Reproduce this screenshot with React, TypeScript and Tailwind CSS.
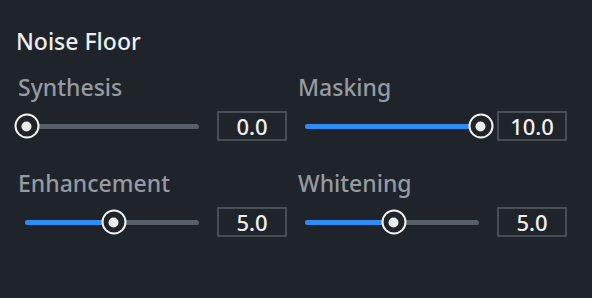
import React from "react";

type Param = { label: string; value: number };

const params: Param[] = [
  { label: "Synthesis", value: 0 },
  { label: "Masking", value: 10 },
  { label: "Enhancement", value: 5 },
  { label: "Whitening", value: 5 },
];

function Slider({ value }: { value: number }) {
  const pct = value / 10;
  return (
    <div className="relative ml-[9px] h-[5px] w-[174px] rounded-full bg-[#576068]">
      <div
        className="absolute left-0 top-0 h-[5px] rounded-full bg-[#2f8cf4]"
        style={{ width: `${pct * 100}%` }}
      />
      <div
        className="absolute top-1/2 flex h-[25px] w-[25px] -translate-x-1/2 -translate-y-1/2 items-center justify-center rounded-full border-2 border-[#f2f2f2] bg-[#1f232a]"
        style={{ left: 1.5 + pct * 174 }}
      >
        <div className="h-[10px] w-[10px] rounded-full bg-[#ececec]" />
      </div>
    </div>
  );
}

function ParamControl({ p }: { p: Param }) {
  return (
    <div className="flex flex-col">
      <div className="pl-[2px] text-[23px] font-medium leading-[28px] text-[#959ba3]">{p.label}</div>
      <div className="mt-[10px] flex h-[30px] items-center">
        <Slider value={p.value} />
        <div className="ml-[18px] flex h-[30px] w-[70px] items-center justify-center border-2 border-[#484e55] text-[22px] font-medium leading-none text-[#f0f0f0]">
          {p.value.toFixed(1)}
        </div>
      </div>
    </div>
  );
}

export default function App() {
  return (
    <div
      className="h-[298px] w-[592px] bg-[#1f232a] px-4 pt-[27px]"
      style={{ fontFamily: '"Noto Sans", sans-serif' }}
    >
      <h2 className="text-[23px] font-medium leading-[28px] text-[#eceef0]">Noise Floor</h2>
      <div className="mt-[18px] grid grid-cols-2 gap-y-[28px]">
        {params.map((p) => (
          <ParamControl key={p.label} p={p} />
        ))}
      </div>
    </div>
  );
}
